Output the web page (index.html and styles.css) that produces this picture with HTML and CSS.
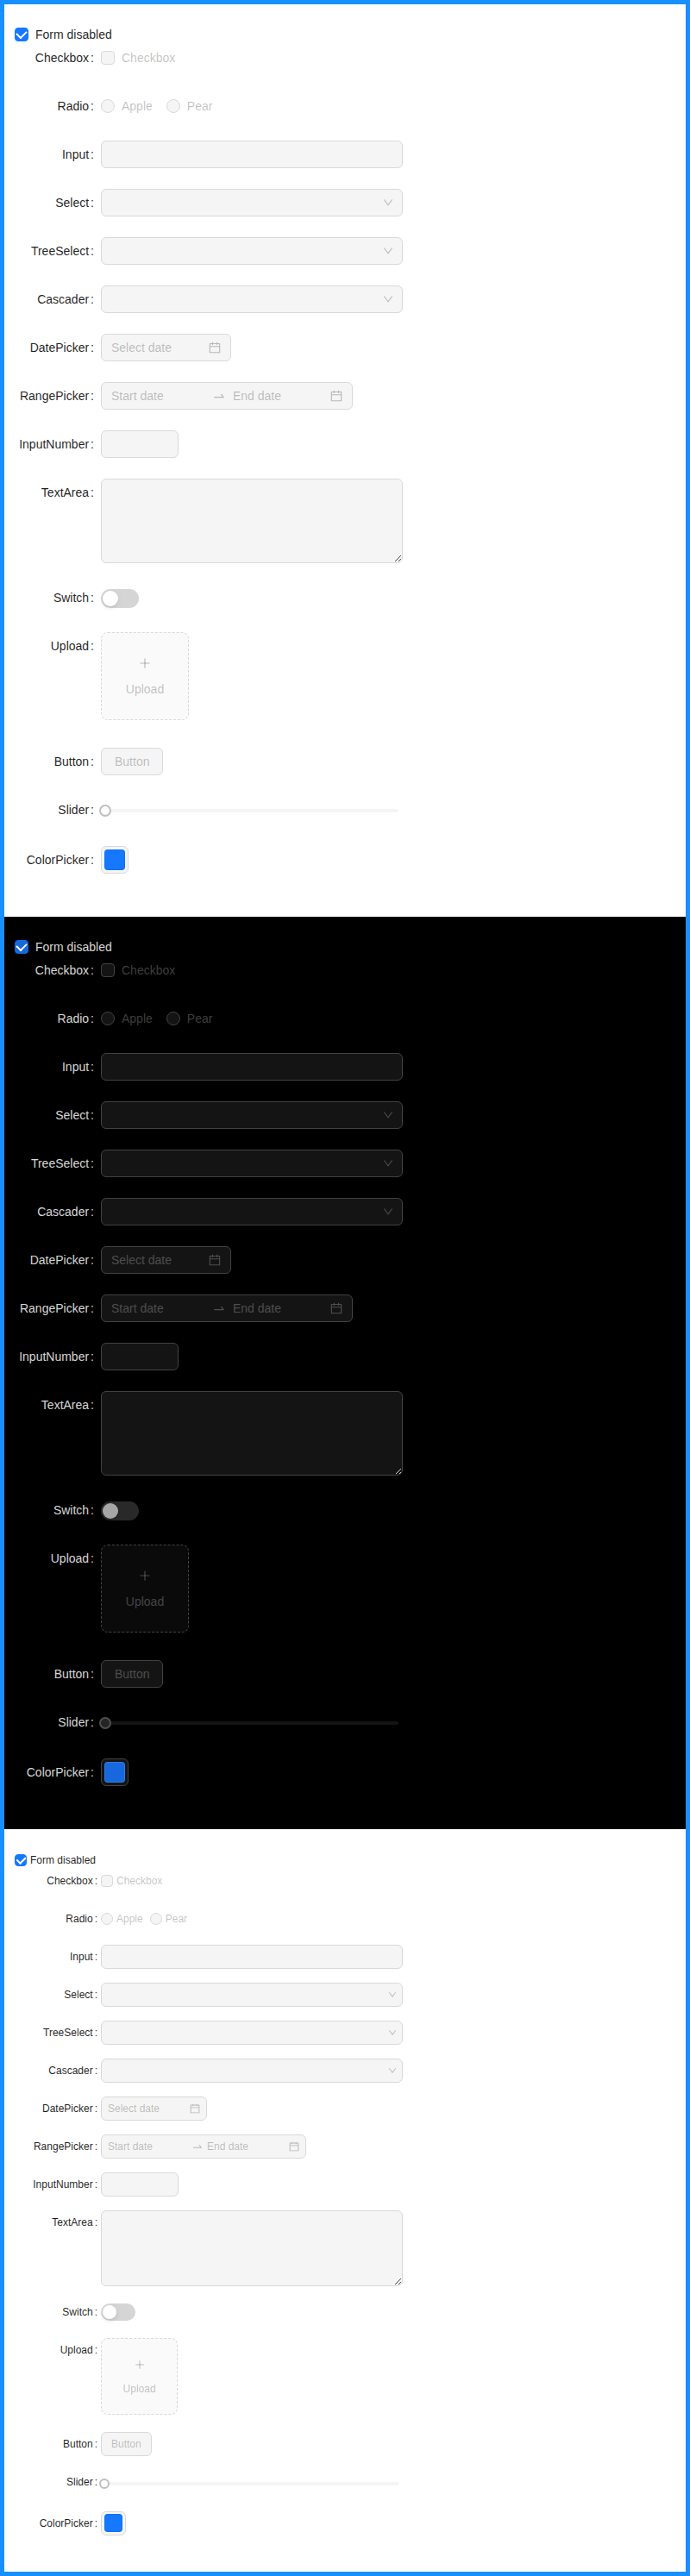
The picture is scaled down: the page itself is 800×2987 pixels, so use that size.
FILE: index.html
```html
<!DOCTYPE html>
<html lang="en">
<head>
<meta charset="utf-8">
<title>Form disabled</title>
<link rel="stylesheet" href="styles.css">
</head>
<body>
<svg class="sprite" aria-hidden="true">
  <symbol id="down" viewBox="64 64 896 896"><path d="M884 256h-75c-5.1 0-9.9 2.5-12.9 6.6L512 654.2 227.9 262.6c-3-4.1-7.8-6.6-12.9-6.6h-75c-6.5 0-10.3 7.4-6.5 12.7l352.6 486.1c12.8 17.6 39 17.6 51.7 0l352.6-486.1c3.9-5.3.1-12.7-6.4-12.7z"/></symbol>
  <symbol id="calendar" viewBox="64 64 896 896"><path d="M880 184H712v-64c0-4.4-3.6-8-8-8h-56c-4.4 0-8 3.6-8 8v64H384v-64c0-4.4-3.6-8-8-8h-56c-4.4 0-8 3.6-8 8v64H144c-17.7 0-32 14.3-32 32v664c0 17.7 14.3 32 32 32h736c17.7 0 32-14.3 32-32V216c0-17.7-14.3-32-32-32zm-40 656H184V460h656v380zM184 392V256h128v48c0 4.4 3.6 8 8 8h56c4.4 0 8-3.6 8-8v-48h256v48c0 4.4 3.6 8 8 8h56c4.4 0 8-3.6 8-8v-48h128v136H184z"/></symbol>
  <symbol id="swap" viewBox="0 0 1024 1024"><path d="M873.1 596.2l-164-208A32 32 0 00684 376h-64.8c-6.7 0-10.4 7.7-6.3 13l144.3 183H152c-4.4 0-8 3.6-8 8v60c0 4.4 3.6 8 8 8h695.9c26.8 0 41.7-30.8 25.2-51.8z"/></symbol>
  <symbol id="plus" viewBox="64 64 896 896"><path d="M482 152h60q8 0 8 8v704q0 8-8 8h-60q-8 0-8-8V160q0-8 8-8z"/><path d="M192 474h672q8 0 8 8v60q0 8-8 8H160q-8 0-8-8v-60q0-8 8-8z"/></symbol>
  <symbol id="grip" viewBox="0 0 7 7"><path d="M0 6h1v1H0zM1 5h1v1H1zM2 4h1v1H2zM3 3h1v1H3zM4 2h1v1H4zM5 1h1v1H5zM6 0h1v1H6zM4 6h1v1H4zM5 5h1v1H5zM6 4h1v1H6z"/></symbol>
  <symbol id="grip-small" viewBox="0 0 7 7"><path d="M1 6h1v1H1zM2 5h1v1H2zM3 4h1v1H3zM4 3h1v1H4zM5 2h1v1H5zM6 1h1v1H6zM5 6h1v1H5zM6 5h1v1H6z"/></symbol>
</svg>

<section class="panel">
  <label class="choice toggle"><span class="box checked"></span><span class="choice-text">Form disabled</span></label>
  <div class="row"><div class="label">Checkbox</div><div class="control"><label class="choice off"><span class="box"></span><span class="choice-text">Checkbox</span></label></div></div>
  <div class="row"><div class="label">Radio</div><div class="control"><label class="choice off"><span class="box round"></span><span class="choice-text">Apple</span></label><label class="choice off"><span class="box round"></span><span class="choice-text">Pear</span></label></div></div>
  <div class="row"><div class="label">Input</div><div class="control"><div class="field"></div></div></div>
  <div class="row"><div class="label">Select</div><div class="control"><div class="field select"><svg class="arrow"><use href="#down"/></svg></div></div></div>
  <div class="row"><div class="label">TreeSelect</div><div class="control"><div class="field select"><svg class="arrow"><use href="#down"/></svg></div></div></div>
  <div class="row"><div class="label">Cascader</div><div class="control"><div class="field select"><svg class="arrow"><use href="#down"/></svg></div></div></div>
  <div class="row"><div class="label">DatePicker</div><div class="control"><div class="field date"><span class="grow">Select date</span><svg class="calendar"><use href="#calendar"/></svg></div></div></div>
  <div class="row"><div class="label">RangePicker</div><div class="control"><div class="field range"><span class="start">Start date</span><svg class="swap"><use href="#swap"/></svg><span class="grow">End date</span><svg class="calendar"><use href="#calendar"/></svg></div></div></div>
  <div class="row"><div class="label">InputNumber</div><div class="control"><div class="field number"></div></div></div>
  <div class="row"><div class="label">TextArea</div><div class="control"><textarea class="field area" disabled></textarea><svg class="grip"><use href="#grip"/></svg></div></div>
  <div class="row"><div class="label">Switch</div><div class="control"><span class="switch"><span class="knob"></span></span></div></div>
  <div class="row upload-row"><div class="label">Upload</div><div class="control"><div class="upload"><span class="plus-line"><svg class="plus"><use href="#plus"/></svg></span><span>Upload</span></div></div></div>
  <div class="row"><div class="label">Button</div><div class="control"><button class="button" disabled>Button</button></div></div>
  <div class="row"><div class="label">Slider</div><div class="control"><div class="slider"><span class="rail"></span><span class="handle"></span></div></div></div>
  <div class="row"><div class="label">ColorPicker</div><div class="control"><div class="picker"><span class="swatch"></span></div></div></div>
</section>

<section class="panel dark">
  <label class="choice toggle"><span class="box checked"></span><span class="choice-text">Form disabled</span></label>
  <div class="row"><div class="label">Checkbox</div><div class="control"><label class="choice off"><span class="box"></span><span class="choice-text">Checkbox</span></label></div></div>
  <div class="row"><div class="label">Radio</div><div class="control"><label class="choice off"><span class="box round"></span><span class="choice-text">Apple</span></label><label class="choice off"><span class="box round"></span><span class="choice-text">Pear</span></label></div></div>
  <div class="row"><div class="label">Input</div><div class="control"><div class="field"></div></div></div>
  <div class="row"><div class="label">Select</div><div class="control"><div class="field select"><svg class="arrow"><use href="#down"/></svg></div></div></div>
  <div class="row"><div class="label">TreeSelect</div><div class="control"><div class="field select"><svg class="arrow"><use href="#down"/></svg></div></div></div>
  <div class="row"><div class="label">Cascader</div><div class="control"><div class="field select"><svg class="arrow"><use href="#down"/></svg></div></div></div>
  <div class="row"><div class="label">DatePicker</div><div class="control"><div class="field date"><span class="grow">Select date</span><svg class="calendar"><use href="#calendar"/></svg></div></div></div>
  <div class="row"><div class="label">RangePicker</div><div class="control"><div class="field range"><span class="start">Start date</span><svg class="swap"><use href="#swap"/></svg><span class="grow">End date</span><svg class="calendar"><use href="#calendar"/></svg></div></div></div>
  <div class="row"><div class="label">InputNumber</div><div class="control"><div class="field number"></div></div></div>
  <div class="row"><div class="label">TextArea</div><div class="control"><textarea class="field area" disabled></textarea><svg class="grip"><use href="#grip-small"/></svg></div></div>
  <div class="row"><div class="label">Switch</div><div class="control"><span class="switch"><span class="knob"></span></span></div></div>
  <div class="row upload-row"><div class="label">Upload</div><div class="control"><div class="upload"><span class="plus-line"><svg class="plus"><use href="#plus"/></svg></span><span>Upload</span></div></div></div>
  <div class="row"><div class="label">Button</div><div class="control"><button class="button" disabled>Button</button></div></div>
  <div class="row"><div class="label">Slider</div><div class="control"><div class="slider"><span class="rail"></span><span class="handle"></span></div></div></div>
  <div class="row"><div class="label">ColorPicker</div><div class="control"><div class="picker"><span class="swatch"></span></div></div></div>
</section>

<section class="panel compact">
  <label class="choice toggle"><span class="box checked"></span><span class="choice-text">Form disabled</span></label>
  <div class="row"><div class="label">Checkbox</div><div class="control"><label class="choice off"><span class="box"></span><span class="choice-text">Checkbox</span></label></div></div>
  <div class="row"><div class="label">Radio</div><div class="control"><label class="choice off"><span class="box round"></span><span class="choice-text">Apple</span></label><label class="choice off"><span class="box round"></span><span class="choice-text">Pear</span></label></div></div>
  <div class="row"><div class="label">Input</div><div class="control"><div class="field"></div></div></div>
  <div class="row"><div class="label">Select</div><div class="control"><div class="field select"><svg class="arrow"><use href="#down"/></svg></div></div></div>
  <div class="row"><div class="label">TreeSelect</div><div class="control"><div class="field select"><svg class="arrow"><use href="#down"/></svg></div></div></div>
  <div class="row"><div class="label">Cascader</div><div class="control"><div class="field select"><svg class="arrow"><use href="#down"/></svg></div></div></div>
  <div class="row"><div class="label">DatePicker</div><div class="control"><div class="field date"><span class="grow">Select date</span><svg class="calendar"><use href="#calendar"/></svg></div></div></div>
  <div class="row"><div class="label">RangePicker</div><div class="control"><div class="field range"><span class="start">Start date</span><svg class="swap"><use href="#swap"/></svg><span class="grow">End date</span><svg class="calendar"><use href="#calendar"/></svg></div></div></div>
  <div class="row"><div class="label">InputNumber</div><div class="control"><div class="field number"></div></div></div>
  <div class="row"><div class="label">TextArea</div><div class="control"><textarea class="field area" disabled></textarea><svg class="grip"><use href="#grip"/></svg></div></div>
  <div class="row"><div class="label">Switch</div><div class="control"><span class="switch"><span class="knob"></span></span></div></div>
  <div class="row upload-row"><div class="label">Upload</div><div class="control"><div class="upload"><span class="plus-line"><svg class="plus"><use href="#plus"/></svg></span><span>Upload</span></div></div></div>
  <div class="row"><div class="label">Button</div><div class="control"><button class="button" disabled>Button</button></div></div>
  <div class="row"><div class="label">Slider</div><div class="control"><div class="slider"><span class="rail"></span><span class="handle"></span></div></div></div>
  <div class="row"><div class="label">ColorPicker</div><div class="control"><div class="picker"><span class="swatch"></span></div></div></div>
</section>
</body>
</html>
```

FILE: styles.css
```css
* {
  box-sizing: border-box;
}

body {
  margin: 0;
  border: 5px solid #1890ff;
  font-family: "Liberation Sans", Arial, sans-serif;
}

.sprite {
  position: absolute;
  width: 0;
  height: 0;
}

.panel {
  --font: 14px;
  --line: 22px;
  --size: 32px;
  --gap: 24px;
  --check: 16px;
  --choice-pad: 8px;
  --pad: 11px;
  --colon-end: 8px;
  --text: rgba(0, 0, 0, 0.88);
  --muted: rgba(0, 0, 0, 0.25);
  --fill: rgba(0, 0, 0, 0.04);
  --soft: rgba(0, 0, 0, 0.02);
  --border: #d9d9d9;
  --primary: #1677ff;
  --surface: #fff;
  --handle: #bfbfbf;
  --handle-fill: #fff;
  --grip: #4d4d4d;
  --swatch-edge: rgba(0, 0, 0, 0.06);
  height: 1058px;
  padding: 24px 12px 0;
  background: var(--surface);
  color: var(--text);
  font-size: var(--font);
  line-height: var(--line);
}

.dark {
  --text: rgba(255, 255, 255, 0.85);
  --muted: rgba(255, 255, 255, 0.25);
  --fill: rgba(255, 255, 255, 0.08);
  --soft: rgba(255, 255, 255, 0.04);
  --border: #424242;
  --primary: #1668dc;
  --surface: #000;
  --handle: #4f4f4f;
  --handle-fill: #242424;
  --grip: #d0d0d0;
  --swatch-edge: rgba(255, 255, 255, 0.12);
}

.compact {
  --font: 12px;
  --line: 20px;
  --size: 28px;
  --gap: 16px;
  --check: 14px;
  --choice-pad: 4px;
  --pad: 7px;
  --colon-end: 4px;
  height: 861px;
}

.row {
  display: flex;
  align-items: flex-start;
  width: 450px;
  margin-bottom: var(--gap);
}

.label {
  width: 100px;
  height: var(--size);
  line-height: var(--size);
  text-align: right;
  white-space: nowrap;
}

.label::after {
  content: ":";
  margin: 0 var(--colon-end) 0 2px;
}

.control {
  position: relative;
  display: flex;
  align-items: center;
  width: 350px;
  min-height: var(--size);
}

.choice {
  display: inline-flex;
  align-items: center;
  margin-right: var(--choice-pad);
}

.toggle {
  display: flex;
  height: 22px;
}

.choice-text {
  padding: 0 var(--choice-pad);
}

.off {
  color: var(--muted);
}

.box {
  display: flex;
  align-items: center;
  justify-content: center;
  flex: none;
  width: var(--check);
  height: var(--check);
  border: 1px solid var(--border);
  border-radius: 4px;
  background: var(--fill);
}

.round {
  border-radius: 50%;
}

.checked {
  border-color: var(--primary);
  background: var(--primary);
}

.checked::after {
  content: "";
  width: calc(var(--check) / 14 * 5);
  height: calc(var(--check) / 14 * 8);
  border: solid #fff;
  border-width: 0 2px 2px 0;
  transform: translateY(-1px) rotate(45deg);
}

.field {
  display: flex;
  align-items: center;
  width: 100%;
  height: var(--size);
  padding: 0 var(--pad);
  border: 1px solid var(--border);
  border-radius: 6px;
  background: var(--fill);
  color: var(--muted);
}

.select {
  justify-content: flex-end;
  padding-right: calc(var(--pad) - 1px);
}

svg {
  flex: none;
  fill: currentColor;
}

.arrow {
  width: 12px;
  height: 12px;
}

.calendar,
.plus {
  width: 14px;
  height: 14px;
}

.swap {
  width: 16px;
  height: 16px;
  margin: 0 8px;
}

.grow {
  flex: 1;
}

.start {
  width: 109px;
}

.date {
  width: 151px;
}

.range {
  width: 292px;
}

.number {
  width: 90px;
}

.area {
  display: block;
  height: 98px;
  margin: 0;
  resize: none;
}

/* Resize grip over the corner of the text area */
.grip {
  position: absolute;
  right: 2px;
  bottom: 2px;
  width: 7px;
  height: 7px;
  fill: var(--grip);
  shape-rendering: crispEdges;
}

.switch {
  width: 44px;
  height: 22px;
  padding: 2px;
  margin-top: 2px;
  border-radius: 11px;
  background: var(--muted);
  opacity: 0.65;
}

.knob {
  display: block;
  width: 18px;
  height: 18px;
  border-radius: 50%;
  background: #fff;
  box-shadow: 0 2px 4px rgba(0, 35, 11, 0.2);
}

.upload-row {
  margin-bottom: calc(var(--gap) + 8px);
}

.upload {
  display: flex;
  flex-direction: column;
  align-items: center;
  justify-content: center;
  gap: 8px;
  width: 102px;
  height: 102px;
  border: 1px dashed var(--border);
  border-radius: 8px;
  background: var(--soft);
  color: var(--muted);
}

.plus-line {
  display: flex;
  align-items: center;
  height: var(--line);
}

.button {
  height: var(--size);
  padding: 0 15px;
  border: 1px solid var(--border);
  border-radius: 6px;
  background: var(--fill);
  color: var(--muted);
  font: inherit;
}

.slider {
  display: flex;
  align-items: center;
  width: 100%;
  height: 34px;
  padding: 0 5px;
}

.rail {
  flex: 1;
  height: 4px;
  border-radius: 2px;
  background: var(--fill);
}

.handle {
  order: -1;
  width: 14px;
  height: 14px;
  margin: 0 -7px;
  border: 2px solid var(--handle);
  border-radius: 50%;
  background: var(--handle-fill);
  z-index: 1;
}

.picker {
  display: flex;
  height: var(--size);
  padding: 3px;
  border: 1px solid var(--border);
  border-radius: 6px;
  background: var(--fill);
}

.swatch {
  width: 24px;
  height: 24px;
  border-radius: 4px;
  background: var(--primary);
  box-shadow: inset 0 0 0 1px var(--swatch-edge);
}

.compact .toggle {
  padding-top: 2px;
}

.compact .arrow {
  width: 10px;
  height: 10px;
}

.compact .calendar {
  width: 12px;
  height: 12px;
}

.compact .swap {
  width: 14px;
  height: 14px;
  margin: 0 4px;
}

.compact .start {
  width: 93px;
}

.compact .date {
  width: 123px;
}

.compact .range {
  width: 238px;
}

.compact .area {
  height: 88px;
}

.compact .switch {
  width: 40px;
  height: 20px;
  margin-top: 0;
}

.compact .knob {
  width: 16px;
  height: 16px;
}

.compact .upload {
  width: 89.25px;
  height: 89.25px;
}

.compact .plus {
  width: 12px;
  height: 12px;
}

.compact .upload-row {
  margin-bottom: 20px;
}

.compact .button {
  padding: 0 11px;
}

.compact .slider {
  height: 31.25px;
  padding: 0 4px;
}

.compact .handle {
  width: 12.75px;
  height: 12.75px;
  margin: 0 -6.375px;
}

.compact .picker {
  padding: 2px 3px;
}

.compact .swatch {
  width: 21px;
  height: 21px;
}
```
